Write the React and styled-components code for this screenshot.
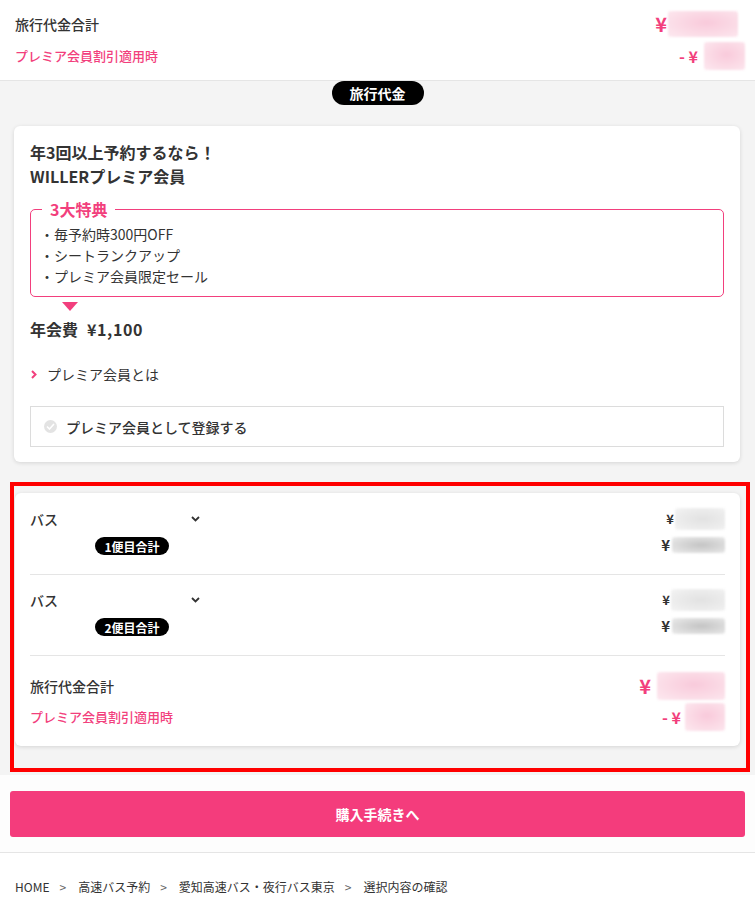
import React from "react";
import styled, { createGlobalStyle } from "styled-components";

const PINK = "#f23f7d";
const TEXT = "#333";

const GlobalStyle = createGlobalStyle`
  html, body { margin: 0; padding: 0; background: #fff; }
  body {
    font-family: "Noto Sans CJK JP", "Noto Sans", sans-serif;
    color: ${TEXT};
    -webkit-font-smoothing: antialiased;
  }
  * { box-sizing: border-box; }
`;

const Page = styled.div`
  width: 755px;
  min-height: 909px;
  background: #fff;
`;

/* ---------- top summary ---------- */
const TopSummary = styled.section`
  background: #fff;
  padding: 8px 10px 8px 15px;
  border-bottom: 1px solid #e5e5e5;
`;

const SummaryRow = styled.div`
  display: flex;
  justify-content: space-between;
  align-items: center;
  height: 32px;
`;

const Label = styled.span`
  font-size: ${(p) => p.$size || 14}px;
  font-weight: 500;
  color: ${(p) => (p.$pink ? PINK : TEXT)};
  line-height: 20px;
`;

const Amount = styled.span`
  display: flex;
  align-items: center;
  height: 20px;
  margin-right: ${(p) => p.$mr || 0}px;
  color: ${(p) => (p.$pink ? PINK : TEXT)};
  font-weight: 700;
  font-size: ${(p) => p.$size || 14}px;
  line-height: 20px;
`;

const Yen = styled.span`
  margin-right: ${(p) => p.$gap || 2}px;
  white-space: pre;
`;

const Blur = styled.span`
  display: inline-block;
  flex-shrink: 0;
  width: ${(p) => p.$w}px;
  height: ${(p) => p.$h}px;
  border-radius: 3px;
  background: ${(p) =>
    p.$pink
      ? "radial-gradient(ellipse at 55% 45%, #f9cadb 0%, #fbdbe6 55%, #fde9f0 100%)"
      : p.$dark
      ? "radial-gradient(ellipse at 55% 50%, #c4c4c4 0%, #dadada 55%, #ececec 100%)"
      : "radial-gradient(ellipse at 55% 50%, #e2e2e2 0%, #ececec 60%, #f4f4f4 100%)"};
  filter: blur(1.2px);
`;

/* ---------- gray area ---------- */
const GrayArea = styled.main`
  background: #f4f4f4;
  padding: 0 5px 3px 10px;
  display: flex;
  flex-direction: column;
`;

const SectionPill = styled.div`
  align-self: center;
  margin-left: -5px;
  width: 92px;
  height: 24px;
  border-radius: 12px;
  background: #000;
  color: #fff;
  font-size: 14px;
  font-weight: 700;
  display: flex;
  align-items: center;
  justify-content: center;
`;

const Card = styled.div`
  background: #fff;
  border-radius: 6px;
  box-shadow: 0 1px 4px rgba(0, 0, 0, 0.13);
`;

const PremiumCard = styled(Card)`
  margin: 21px 10px 0 4px;
  padding: 14px 16px 15px 16px;
`;

const Title = styled.h2`
  margin: 0;
  font-size: 16px;
  font-weight: 700;
  line-height: 24px;
  color: ${TEXT};
`;

const BenefitBox = styled.div`
  position: relative;
  margin-top: 21px;
  border: 1px solid ${PINK};
  border-radius: 5px;
  padding: 14px 0 9px 9px;
`;

const BenefitLabel = styled.span`
  position: absolute;
  top: -11px;
  left: 11px;
  padding: 0 8px;
  background: #fff;
  color: ${PINK};
  font-size: 16px;
  font-weight: 700;
  line-height: 20px;
`;

const BenefitList = styled.ul`
  list-style: none;
  margin: 0;
  padding: 0;
`;

const BenefitItem = styled.li`
  font-size: 14px;
  line-height: 21px;
  color: ${TEXT};
  &::before {
    content: "・";
    display: inline-block;
    width: 14px;
  }
`;

const Triangle = styled.div`
  margin: 5px 0 0 32px;
  width: 0;
  height: 0;
  border-left: 8px solid transparent;
  border-right: 8px solid transparent;
  border-top: 9px solid ${PINK};
`;

const Fee = styled.div`
  margin-top: 6px;
  font-size: 16px;
  font-weight: 700;
  line-height: 24px;
`;

const FeePrice = styled.span`
  margin-left: 9px;
  letter-spacing: 0.6px;
`;

const AboutLink = styled.a`
  margin-top: 21px;
  display: flex;
  align-items: center;
  gap: 10px;
  font-size: 14px;
  line-height: 24px;
  color: ${TEXT};
  text-decoration: none;
  padding-left: 1px;
`;

const RegisterBox = styled.label`
  margin-top: 20px;
  height: 41px;
  border: 1px solid #dcdcdc;
  display: flex;
  align-items: center;
  gap: 9px;
  padding: 0 13px;
  font-size: 14px;
  font-weight: 500;
  color: ${TEXT};
`;

const CheckCircle = styled.span`
  width: 13px;
  height: 13px;
  border-radius: 50%;
  background: #e3e3e3;
  display: flex;
  align-items: center;
  justify-content: center;
`;

/* ---------- highlighted breakdown ---------- */
const Highlight = styled.div`
  margin-top: 20px;
  border: 4px solid #ff0000;
  padding: 7px 6px 22px 1px;
`;

const BreakdownCard = styled(Card)`
  padding: 1px 15px 0;
`;

const BusRow = styled.div`
  display: flex;
  justify-content: space-between;
  padding: 15px 0 19px;
  border-bottom: 1px solid #e5e5e5;
`;

const BusLeft = styled.div`
  width: 170px;
  display: flex;
  flex-direction: column;
  gap: 8px;
`;

const BusHead = styled.div`
  display: flex;
  justify-content: space-between;
  align-items: center;
  height: 20px;
  font-size: 14px;
  font-weight: 500;
`;

const TripBadge = styled.span`
  margin-left: 65px;
  width: 74px;
  height: 18px;
  border-radius: 9px;
  background: #000;
  color: #fff;
  font-size: 12px;
  font-weight: 700;
  display: flex;
  align-items: center;
  justify-content: center;
`;

const PriceCol = styled.div`
  display: flex;
  flex-direction: column;
  align-items: flex-end;
  gap: ${(p) => p.$gap || 8}px;
`;

const TotalRow = styled.div`
  display: flex;
  justify-content: space-between;
  padding: 20px 0 19px;
`;

const TotalLeft = styled.div`
  display: flex;
  flex-direction: column;
  gap: 11px;
`;

/* ---------- footer ---------- */
const ActionBar = styled.div`
  background: #fdfdfd;
  padding: 16px 10px 15px;
  border-bottom: 1px solid #e5e5e5;
`;

const PurchaseButton = styled.button`
  width: 100%;
  height: 46px;
  border: none;
  border-radius: 3px;
  background: #f43c7c;
  color: #fff;
  font-family: inherit;
  font-size: 14px;
  font-weight: 700;
  cursor: pointer;
`;

const Breadcrumb = styled.nav`
  padding: 27px 15px;
  display: flex;
  align-items: center;
  font-size: 12px;
  line-height: 14px;
  color: ${TEXT};
`;

const Crumb = styled.span`
  color: ${TEXT};
`;

const Sep = styled.span`
  color: #666;
  padding: 0 12px 0 10px;
`;

const ChevronRight = () => (
  <svg width="6" height="9" viewBox="0 0 6 9">
    <polyline points="1,1 4.5,4.5 1,8" fill="none" stroke={PINK} strokeWidth="2" />
  </svg>
);

const ChevronDown = () => (
  <svg width="9" height="6" viewBox="0 0 9 6">
    <polyline points="1,1 4.5,4.5 8,1" fill="none" stroke="#333" strokeWidth="1.8" />
  </svg>
);

const Check = () => (
  <svg width="9" height="7" viewBox="0 0 9 7">
    <polyline points="1,3.5 3.5,6 8,1" fill="none" stroke="#fff" strokeWidth="1.6" />
  </svg>
);

const buses = [
  { id: 1, badge: "1便目合計", b1: 50, b2: 53 },
  { id: 2, badge: "2便目合計", b1: 54, b2: 53 },
];

export default function App() {
  return (
    <Page>
      <GlobalStyle />
      <TopSummary>
        <SummaryRow>
          <Label>旅行代金合計</Label>
          <Amount $pink $size={20} $mr={7}>
            <Yen $gap={1}>¥</Yen>
            <Blur $pink $w={70} $h={26} />
          </Amount>
        </SummaryRow>
        <SummaryRow>
          <Label $pink $size={13}>プレミア会員割引適用時</Label>
          <Amount $pink $size={16}>
            <Yen $gap={6}>{"- ¥"}</Yen>
            <Blur $pink $w={41} $h={28} />
          </Amount>
        </SummaryRow>
      </TopSummary>

      <GrayArea>
        <SectionPill>旅行代金</SectionPill>

        <PremiumCard>
          <Title>
            年3回以上予約するなら！
            <br />
            WILLERプレミア会員
          </Title>
          <BenefitBox>
            <BenefitLabel>3大特典</BenefitLabel>
            <BenefitList>
              <BenefitItem>毎予約時300円OFF</BenefitItem>
              <BenefitItem>シートランクアップ</BenefitItem>
              <BenefitItem>プレミア会員限定セール</BenefitItem>
            </BenefitList>
          </BenefitBox>
          <Triangle />
          <Fee>
            年会費<FeePrice>¥1,100</FeePrice>
          </Fee>
          <AboutLink href="#">
            <ChevronRight />
            プレミア会員とは
          </AboutLink>
          <RegisterBox>
            <CheckCircle>
              <Check />
            </CheckCircle>
            プレミア会員として登録する
          </RegisterBox>
        </PremiumCard>

        <Highlight>
          <BreakdownCard>
            {buses.map((b) => (
              <BusRow key={b.id}>
                <BusLeft>
                  <BusHead>
                    バス
                    <ChevronDown />
                  </BusHead>
                  <TripBadge>{b.badge}</TripBadge>
                </BusLeft>
                <PriceCol $gap={6}>
                  <Amount $size={13}>
                    <Yen $gap={1}>¥</Yen>
                    <Blur $w={b.b1} $h={22} />
                  </Amount>
                  <Amount $size={15}>
                    <Yen $gap={2}>¥</Yen>
                    <Blur $dark $w={b.b2} $h={16} />
                  </Amount>
                </PriceCol>
              </BusRow>
            ))}
            <TotalRow>
              <TotalLeft>
                <Label>旅行代金合計</Label>
                <Label $pink $size={13}>プレミア会員割引適用時</Label>
              </TotalLeft>
              <PriceCol $gap={11}>
                <Amount $pink $size={20}>
                  <Yen $gap={6}>¥</Yen>
                  <Blur $pink $w={68} $h={28} />
                </Amount>
                <Amount $pink $size={16}>
                  <Yen $gap={4}>{"- ¥"}</Yen>
                  <Blur $pink $w={40} $h={28} />
                </Amount>
              </PriceCol>
            </TotalRow>
          </BreakdownCard>
        </Highlight>
      </GrayArea>

      <ActionBar>
        <PurchaseButton>購入手続きへ</PurchaseButton>
      </ActionBar>

      <Breadcrumb>
        <Crumb>HOME</Crumb>
        <Sep>&gt;</Sep>
        <Crumb>高速バス予約</Crumb>
        <Sep>&gt;</Sep>
        <Crumb>愛知高速バス・夜行バス東京</Crumb>
        <Sep>&gt;</Sep>
        <Crumb>選択内容の確認</Crumb>
      </Breadcrumb>
    </Page>
  );
}
